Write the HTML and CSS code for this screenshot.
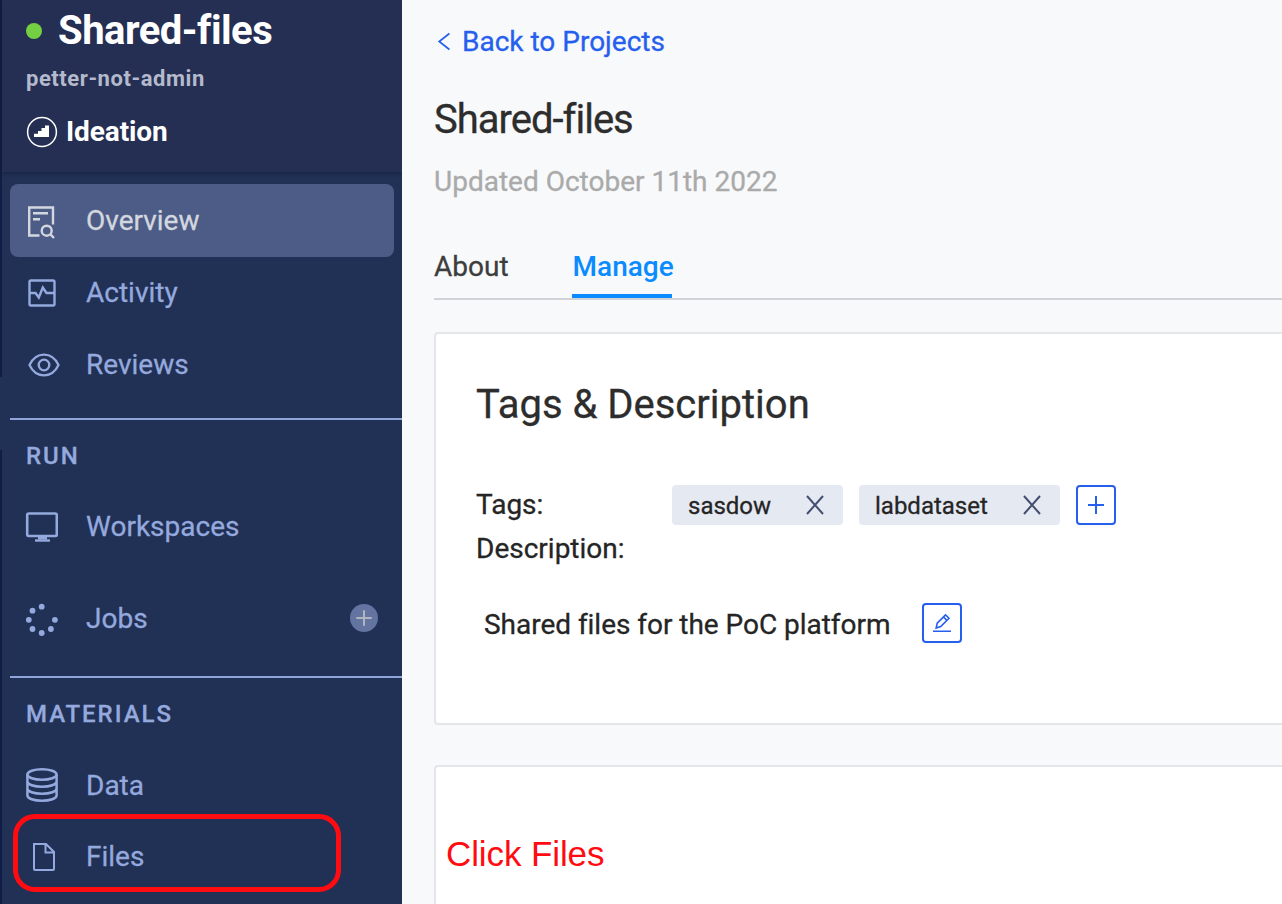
FILE: index.html
```html
<!DOCTYPE html>
<html lang="en">
<head>
<meta charset="utf-8">
<title>Shared-files</title>
<link rel="stylesheet" href="styles.css">
</head>
<body>
<div class="app">
  <aside class="sidebar">
    <header class="project">
      <div class="project-title"><span class="status-dot"></span><span class="project-name">Shared-files</span></div>
      <div class="owner"><span>petter-not-admin</span></div>
      <div class="stage">
        <svg width="32" height="32" viewBox="0 0 32 32"><circle cx="16" cy="16" r="14.4" fill="none" stroke="#fff" stroke-width="1.5"/><path d="M8 21v-3.300h4v-2.700h3.500v-3h3.500v-2.500h4v11.500z" fill="#fff"/></svg>
        <span>Ideation</span>
      </div>
    </header>
    <nav class="nav">
      <a class="item active">
        <svg width="36" height="36" viewBox="-1 0 36 36" fill="none" stroke="currentColor" stroke-width="2.4"><path d="M16.500 31.500H6.200V3.500H30V20.500M10 9.300h15M10 15.300h7"/><circle cx="23.700" cy="26.700" r="5"/><path d="M27.200 30.200l3.800 3.800"/></svg>
        <span>Overview</span>
      </a>
      <a class="item activity">
        <svg width="36" height="36" viewBox="-1.500 1.500 36 36" fill="none" stroke="currentColor" stroke-width="2.400"><rect x="6" y="6" width="25" height="25" rx="1.500"/><path d="M6 18.500h6l3.300 4.500 4-10 3.700 5.500H31"/></svg>
        <span>Activity</span>
      </a>
      <a class="item">
        <svg width="36" height="36" viewBox="-2 1.500 36 36" fill="none" stroke="currentColor" stroke-width="2.300" overflow="visible"><path d="M5.500 18.500C12 4.700 28 4.700 34.500 18.500C28 32.300 12 32.300 5.500 18.500z"/><circle cx="20" cy="18.500" r="5.300"/></svg>
        <span>Reviews</span>
      </a>
    </nav>
    <section class="group run">
      <h2 class="group-title">RUN</h2>
      <a class="item workspaces">
        <svg width="36" height="36" viewBox="0 2 36 36" fill="none" stroke="currentColor"><rect x="5.200" y="5.500" width="29.600" height="22.500" rx="1.500" stroke-width="2.600"/><path d="M16 30h9" stroke-width="3"/><path d="M13 32.500h15" stroke-width="2.400"/></svg>
        <span>Workspaces</span>
      </a>
      <a class="item jobs">
        <svg width="36" height="36" viewBox="0 2 36 36" fill="currentColor"><circle cx="19.700" cy="6.700" r="2.900"/><circle cx="10.500" cy="10.700" r="2.900"/><circle cx="6.800" cy="19.800" r="2.900"/><circle cx="10.500" cy="29" r="2.900"/><circle cx="19.700" cy="33" r="2.900"/><circle cx="28.900" cy="29" r="2.900"/><circle cx="32.900" cy="19.800" r="2.900"/></svg>
        <span>Jobs</span>
        <svg class="add-job" width="28" height="28" viewBox="0 0 28 28"><circle cx="14" cy="14" r="14" fill="#62749f"/><path d="M6.300 14h15.400M14 6.300v15.400" stroke="#b0b5bf" stroke-width="2"/></svg>
      </a>
    </section>
    <section class="group materials">
      <h2 class="group-title">MATERIALS</h2>
      <a class="item data">
        <svg width="36" height="36" viewBox="0 2 36 36" fill="none" stroke="currentColor" stroke-width="2.500" overflow="visible"><ellipse cx="20" cy="7.500" rx="14.600" ry="5.300"/><path d="M5.400 7.500v21c0 2.900 6.500 5.300 14.600 5.300s14.600-2.400 14.600-5.300v-21M5.400 14.500c0 2.900 6.500 5.300 14.600 5.300s14.600-2.400 14.600-5.300M5.400 21.500c0 2.900 6.500 5.300 14.600 5.300s14.600-2.400 14.600-5.300"/></svg>
        <span>Data</span>
      </a>
      <a class="item files">
        <svg width="36" height="36" viewBox="0 1.500 36 36" fill="none" stroke="currentColor" stroke-width="2"><path d="M12 5.500h12l8 8v17q0 1-1 1H13q-1 0-1-1zM23.500 5.500v8.500h8.500"/></svg>
        <span>Files</span>
      </a>
    </section>
    <div class="highlight"></div>
  </aside>
  <main class="content">
    <a class="back"><svg width="28" height="28" viewBox="0 .5 28 28" fill="none" stroke="currentColor" stroke-width="1.700"><path d="M15.400 6L5.200 14l10.200 8"/></svg><span>Back to Projects</span></a>
    <h1 class="page-title"><span>Shared-files</span></h1>
    <div class="updated"><span>Updated October 11th 2022</span></div>
    <div class="tabs"><a class="tab"><span>About</span></a><a class="tab selected"><span>Manage</span></a></div>
    <section class="card details">
      <h2 class="card-title"><span>Tags &amp; Description</span></h2>
      <div class="tag-row">
        <span class="label">Tags:</span>
        <div class="tags">
          <span class="tag first"><span>sasdow</span><svg width="18" height="20" viewBox="0 0 18 20"><path d="M1 1l16 18M17 1L1 19" stroke="#444f70" stroke-width="2"/></svg></span>
          <span class="tag second"><span>labdataset</span><svg width="18" height="20" viewBox="0 0 18 20"><path d="M1 1l16 18M17 1L1 19" stroke="#444f70" stroke-width="2"/></svg></span>
          <button class="square"><svg width="36" height="36" viewBox="0 0 36 36"><path d="M10 18h16M18 9v18" stroke="#265fee" stroke-width="2"/></svg></button>
        </div>
      </div>
      <div class="label desc-label"><span>Description:</span></div>
      <div class="desc"><span>Shared files for the PoC platform</span>
        <button class="square"><svg width="36" height="36" viewBox="0 0 36 36" fill="none" stroke="#265fee" stroke-width="1.600"><path d="M9 26.300h18M12.200 23l1-4.800 8.300-8.300 3.500 3.400-8.300 8.300zM19.500 12l3.400 3.400"/></svg></button>
      </div>
    </section>
    <section class="card note-card"><div class="note"><span>Click Files</span></div></section>
  </main>
</div>
</body>
</html>
```
FILE: styles.css
```css
* { box-sizing: border-box; }
body { margin: 0; font-family: Roboto, "Liberation Sans", sans-serif; font-size: 28px; -webkit-text-stroke: .3px; }
h1, h2 { margin: 0; font-weight: 400; }
svg { display: block; flex: none; }
.app { display: flex; width: 1282px; height: 904px; overflow: hidden; background: #f8f9fb; }

.sidebar {
  position: relative; flex: none; width: 402px; height: 904px; overflow: hidden; color: #94a9dd;
  background: linear-gradient(#111d47 0 377px, #213055 377px 450px, #111d47 450px) left / 2px 100% no-repeat #213055;
}
.project { height: 172px; margin-left: 2px; padding-left: 24px; background: #242f53; color: #fff; box-shadow: 0 1px 4px rgba(15, 22, 48, .6); -webkit-text-stroke: 0; }
.project-title { display: flex; align-items: center; gap: 16px; height: 60px; font-size: 40px; font-weight: 700; letter-spacing: -.5px; }
.status-dot { width: 16px; height: 16px; margin-top: 2px; border-radius: 50%; background: #74d042; }
.owner { height: 37px; font-size: 22px; line-height: 37px; font-weight: 700; letter-spacing: .55px; color: #b4bacc; }
.stage { display: flex; align-items: center; gap: 8px; height: 69px; font-weight: 700; letter-spacing: -.1px; }

.nav { padding: 12px 8px 17px 10px; height: 246px; }
.item { display: flex; align-items: center; gap: 28px; height: 72px; padding-left: 12px; line-height: 36px; }
.item svg { margin-top: 2px; }
.item.active { height: 73px; border-radius: 8px; background: #4c5c86; color: #d3d7df; }
.activity { height: 71px; }
.activity + .item { height: 73px; }
.group { margin-left: 10px; border-top: 2px solid #8fa4d8; }
.run { height: 258px; }
.group-title { height: 71px; padding-left: 16px; font-size: 24px; line-height: 73px; font-weight: 500; letter-spacing: 1.95px; }
.workspaces { height: 71px; }
.jobs { height: 113px; padding-right: 24px; }
.jobs .add-job { margin: -1px 0 0 auto; }
.data { height: 73px; }
.files { height: 70px; }
.highlight { position: absolute; left: 13px; top: 814px; width: 328px; height: 78px; border: 5px solid #ff0b12; border-radius: 22px; }

.content { width: 880px; padding-left: 32px; color: #252525; }
.back { display: flex; align-items: center; height: 83px; color: #265fee; }
.page-title { height: 73px; font-size: 40px; line-height: 73px; color: #2d2d2d; letter-spacing: -1px; }
.updated { height: 51px; line-height: 51px; color: #aaa; }
.tabs { display: flex; gap: 63px; height: 93px; border-bottom: 2px solid #d2d3d6; padding-top: 27px; color: #3d3d3d; }
.tab { height: 64px; line-height: 66px; }
.tab.selected { width: 100px; padding-left: 1px; border-bottom: 4px solid #0a8cff; color: #0a8cff; font-weight: 500; -webkit-text-stroke: 0; }
.card { margin-top: 32px; border: 2px solid #e4e6e9; border-right: 0; border-radius: 4px 0 0 4px; background: #fff; padding-left: 40px; }
.details { height: 393px; padding-top: 38px; }
.card-title { height: 64px; font-size: 40px; line-height: 66px; color: #2d2d2d; }
.tag-row { display: flex; align-items: center; height: 40px; margin-top: 49px; }
.tag-row .label { width: 196px; padding-bottom: 2px; }
.tags { display: flex; gap: 16px; }
.tag { display: flex; justify-content: space-between; align-items: center; height: 40px; padding: 0 19px 0 16px; border-radius: 4px; background: #e5e9f2; font-size: 24px; }
.tag span { padding-top: 2px; }
.first { width: 171px; }
.second { width: 201px; }
.square { flex: none; width: 40px; height: 40px; padding: 0; border: 2px solid #265fee; border-radius: 4px; background: #fff; box-shadow: 0 3px 2px rgba(0, 0, 0, .02); }
.desc-label { height: 47px; line-height: 47px; }
.desc { display: flex; align-items: center; height: 40px; margin-top: 31px; padding-left: 8px; }
.desc span { width: 438px; padding-top: 2px; letter-spacing: -.03px; white-space: nowrap; }
.note-card { height: 200px; margin-top: 40px; padding: 64px 0 0 10px; }
.note { font-family: "Liberation Sans", Arial, sans-serif; font-size: 35px; line-height: 46px; letter-spacing: -.1px; color: #ff0b12; -webkit-text-stroke: 0; }
```
